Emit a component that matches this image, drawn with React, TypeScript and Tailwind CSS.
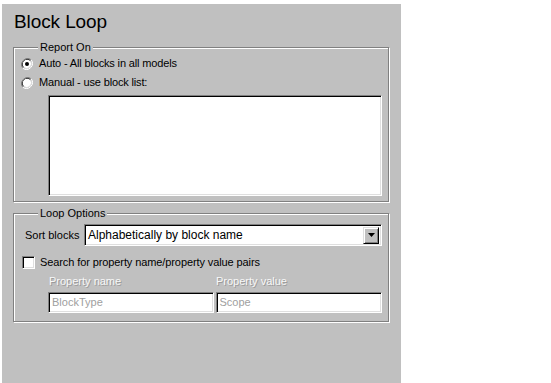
import React from "react";

const font = { fontFamily: '"Liberation Sans", Arial, sans-serif' };

function Radio({ checked }: { checked?: boolean }) {
  return (
    <svg width="12" height="12" viewBox="0 0 12 12" className="shrink-0">
      <path d="M10.2 1.8A6 6 0 0 0 1.8 10.2" fill="none" stroke="#808080" strokeWidth="1" />
      <path d="M9.5 2.5A5 5 0 0 0 2.5 9.5" fill="none" stroke="#000" strokeWidth="1" />
      <circle cx="6" cy="6" r="4.3" fill="#fff" />
      <path d="M1.8 10.2A6 6 0 0 0 10.2 1.8" fill="none" stroke="#fff" strokeWidth="1" />
      <path d="M2.5 9.5A5 5 0 0 0 9.5 2.5" fill="none" stroke="#dfdfdf" strokeWidth="1" />
      {checked && <circle cx="6" cy="6" r="2" fill="#000" />}
    </svg>
  );
}

function GroupBox({ title, className, children }: { title: string; className?: string; children: React.ReactNode }) {
  return (
    <div className={"relative border border-[#808080] shadow-[1px_1px_0_#fff,inset_1px_1px_0_#fff] " + (className ?? "")}>
      <div className="absolute left-[24px] top-[-8px] bg-[#c0c0c0] px-[2px] text-[11px] leading-[14px] text-black">
        {title}
      </div>
      {children}
    </div>
  );
}

const sunken =
  "border border-t-[#808080] border-l-[#808080] border-b-white border-r-white shadow-[inset_1px_1px_0_#000,inset_-1px_-1px_0_#dfdfdf]";

const disabledText = "text-[#f8f8f8] [text-shadow:1px_1px_0_#9a9a9a]";

export default function App() {
  return (
    <div className="w-[551px] h-[383px] bg-white overflow-hidden" style={font}>
      <div className="ml-[2px] mt-[4px] w-[399px] h-[379px] bg-[#c0c0c0] pt-[6px] text-black">
        <div className="pl-[12px] text-[19px] leading-[24px] tracking-[-0.1px]">Block Loop</div>

        <GroupBox title="Report On" className="ml-[11px] mt-[13px] w-[376px] h-[155px]">
          <div className="pl-[7px] pt-[6px]">
            <div className="flex items-center h-[19px] gap-[6px] text-[11px]">
              <Radio checked />
              <span className="tracking-[-0.15px]">Auto - All blocks in all models</span>
            </div>
            <div className="flex items-center h-[19px] gap-[6px] text-[11px]">
              <Radio />
              <span className="tracking-[-0.15px]">Manual - use block list:</span>
            </div>
            <div className={"ml-[27px] mt-[3px] w-[334px] h-[101px] bg-white " + sunken} />
          </div>
        </GroupBox>

        <GroupBox title="Loop Options" className="ml-[11px] mt-[11px] w-[376px] h-[109px]">
          <div className="pl-[11px] pr-[6px] pt-[10px]">
            <div className="flex items-center h-[22px]">
              <span className="text-[11px]">Sort blocks</span>
              <div className={"ml-auto w-[298px] h-[22px] bg-white flex items-center justify-between pl-[3px] pr-[2px] " + sunken}>
                <span className="text-[12px] leading-[14px]">Alphabetically by block name</span>
                <div className="w-[16px] h-[17px] bg-[#c0c0c0] border border-t-[#dfdfdf] border-l-[#dfdfdf] border-b-black border-r-black shadow-[inset_1px_1px_0_#fff,inset_-1px_-1px_0_#808080] flex items-center justify-center">
                  <svg width="7" height="4" viewBox="0 0 7 4">
                    <path d="M0 0H7L3.5 4Z" fill="#000" />
                  </svg>
                </div>
              </div>
            </div>
            <div className="flex items-center h-[18px] mt-[7px] gap-[5px] text-[11px] -ml-[3px]">
              <div className={"w-[13px] h-[13px] bg-white shrink-0 " + sunken} />
              <span className="tracking-[-0.1px]">Search for property name/property value pairs</span>
            </div>
            <div className="flex ml-[23px] mt-[2px] text-[11px] h-[17px] items-center">
              <span className={"w-[167px] pl-[1px] " + disabledText}>Property name</span>
              <span className={"pl-[1px] " + disabledText}>Property value</span>
            </div>
            <div className="flex ml-[23px] mt-[2px] gap-[2px]">
              <div className={"w-[166px] h-[21px] bg-white flex items-center pl-[3px] text-[11px] text-[#a0a0a0] " + sunken}>
                BlockType
              </div>
              <div className={"w-[167px] h-[21px] bg-white flex items-center pl-[3px] text-[11px] text-[#a0a0a0] " + sunken}>
                Scope
              </div>
            </div>
          </div>
        </GroupBox>
      </div>
    </div>
  );
}
